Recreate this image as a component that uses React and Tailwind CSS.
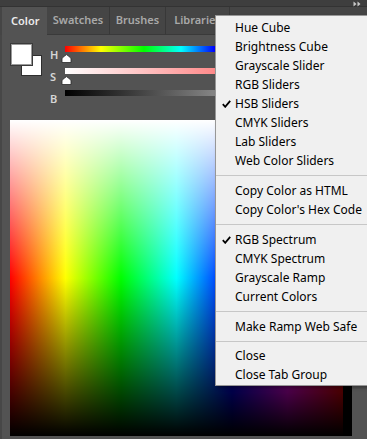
import React from "react";

const Check = () => (
  <svg width="9" height="8" viewBox="0 0 9 8" className="absolute left-[6px] top-[6px]">
    <path d="M0.8 4.2 L3.2 6.8 L8.2 0.8" fill="none" stroke="#000" strokeWidth="1.8" />
  </svg>
);

const Item = ({ label, checked }) => (
  <div className="relative h-[19px] leading-[19px] pl-[19px] whitespace-nowrap">
    {checked && <Check />}
    {label}
  </div>
);

const Sep = ({ h = "h-[11px]" }) => (
  <div className={`${h} flex items-center`}>
    <div className="h-px w-full bg-[#c7c7c7]" />
  </div>
);

const Thumb = () => (
  <svg width="11" height="9" viewBox="0 0 11 9" className="block ml-[-4px] mt-[2px]">
    <path d="M1 8.5 L1 5 Q1 4 2 3.2 L5.5 0.6 L9 3.2 Q10 4 10 5 L10 8.5 Z" fill="#fff" stroke="#2a2a2a" strokeWidth="0.8" />
  </svg>
);

export default function App() {
  return (
    <div className="relative w-[367px] h-[439px] overflow-hidden bg-[#535353] font-['Noto_Sans',sans-serif]">
      {/* top strip */}
      <div className="h-[7px] bg-[#3e3e3e] border-b border-[#333] flex justify-end pr-[5px]">
        <svg width="9" height="6" viewBox="0 0 9 6" className="mt-[1px]">
          <path d="M0.5 0.5 L3.5 3 L0.5 5.5 Z M4.5 0.5 L7.5 3 L4.5 5.5 Z" fill="#c8c8c8" />
        </svg>
      </div>
      {/* tabs */}
      <div className="h-[28px] flex bg-[#454545] border-l-2 border-[#454545]">
        <div className="w-[45px] bg-[#535353] text-[#ececec] text-[11px] font-semibold flex items-center pl-[9px]">Color</div>
        <div className="w-[63px] border-r border-[#383838] border-b border-b-[#3a3a3a] text-[#a9a9a9] text-[11px] font-semibold flex items-center justify-center">Swatches</div>
        <div className="w-[56px] border-r border-[#383838] border-b border-b-[#3a3a3a] text-[#a9a9a9] text-[11px] font-semibold flex items-center justify-center">Brushes</div>
        <div className="w-[64px] border-r border-[#383838] border-b border-b-[#3a3a3a] text-[#a9a9a9] text-[11px] font-semibold flex items-center justify-center">Libraries</div>
        <div className="flex-1 border-b border-[#3a3a3a]" />
      </div>
      {/* body */}
      <div className="border-l-2 border-[#474747] h-[404px] pt-[9px]">
        <div className="flex">
          {/* swatches */}
          <div className="relative ml-[9px] w-[31px] h-[32px]">
            <div className="absolute left-[10px] top-[11px] w-[21px] h-[21px] bg-white border border-[#2e2e2e]" />
            <div className="absolute left-0 top-0 w-[21px] h-[21px] bg-white border border-[#9a9a9a] outline outline-1 outline-[#3a3a3a]" />
          </div>
          {/* sliders */}
          <div className="ml-[8px] flex-1 flex flex-col mt-[2px]">
            {[
              { l: "H", bar: "bg-[linear-gradient(to_right,#ff0000_0px,#ffff00_36px,#00ff00_79px,#00ffff_116px,#0000ff_150px,#ff00ff_220px,#ff0000_288px)]", thumb: true },
              { l: "S", bar: "bg-[linear-gradient(to_right,#ffffff,#ff2020)]", thumb: true },
              { l: "B", bar: "bg-[linear-gradient(to_right,#000000,#ffffff)]", thumb: false },
            ].map((s) => (
              <div key={s.l} className="flex h-[22px]">
                <div className="w-[15px] text-[11px] leading-[12px] pt-[3px] text-[#d6d6d6] font-semibold">{s.l}</div>
                <div className="flex-1 mr-[15px]">
                  <div className={`h-[6px] ${s.bar}`} />
                  {s.thumb && <Thumb />}
                </div>
              </div>
            ))}
          </div>
        </div>
        {/* spectrum */}
        <div className="mt-[8px] ml-[8px] w-[342px] h-[316px] flex">
          <div className="w-[333px] h-full bg-[linear-gradient(to_bottom,rgba(255,255,255,1)_0%,rgba(255,255,255,0)_50%,rgba(0,0,0,0)_50%,rgba(0,0,0,1)_100%),linear-gradient(to_right,#ff0000_0%,#ffff00_16.67%,#00ff00_33.33%,#00ffff_50%,#0000ff_66.67%,#ff00ff_83.33%,#ff0000_100%)]" />
          <div className="w-[9px] h-full flex flex-col">
            <div className="flex-1 bg-white" />
            <div className="flex-1 bg-black" />
          </div>
        </div>
      </div>
      {/* menu */}
      <div className="absolute left-[215px] top-[15px] w-[170px] bg-[#f0f0f0] border border-[#979797] shadow-[2px_2px_3px_rgba(0,0,0,0.35)] pt-[2px] pb-[1px] text-[12px] text-black">
        <Item label="Hue Cube" />
        <Item label="Brightness Cube" />
        <Item label="Grayscale Slider" />
        <Item label="RGB Sliders" />
        <Item label="HSB Sliders" checked />
        <Item label="CMYK Sliders" />
        <Item label="Lab Sliders" />
        <Item label="Web Color Sliders" />
        <Sep />
        <Item label="Copy Color as HTML" />
        <Item label="Copy Color's Hex Code" />
        <Sep />
        <Item label="RGB Spectrum" checked />
        <Item label="CMYK Spectrum" />
        <Item label="Grayscale Ramp" />
        <Item label="Current Colors" />
        <Sep />
        <Item label="Make Ramp Web Safe" />
        <Sep h="h-[10px]" />
        <Item label="Close" />
        <Item label="Close Tab Group" />
      </div>
    </div>
  );
}
